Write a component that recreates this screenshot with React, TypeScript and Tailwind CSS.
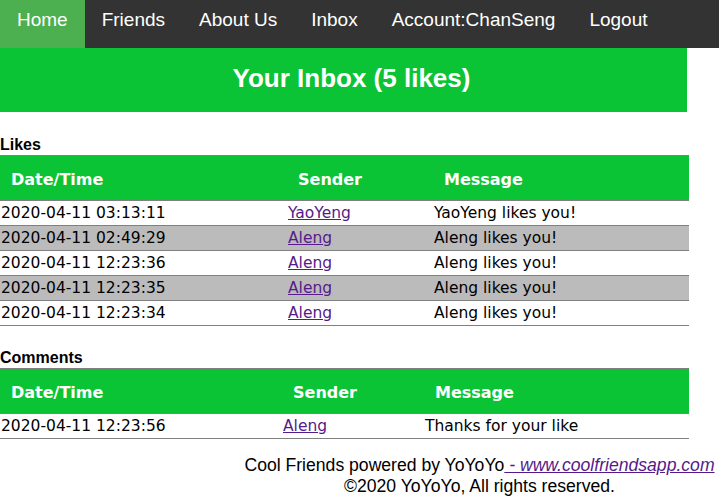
import React from "react";

const likes = [
  { date: "2020-04-11 03:13:11", sender: "YaoYeng", msg: "YaoYeng likes you!" },
  { date: "2020-04-11 02:49:29", sender: "Aleng", msg: "Aleng likes you!" },
  { date: "2020-04-11 12:23:36", sender: "Aleng", msg: "Aleng likes you!" },
  { date: "2020-04-11 12:23:35", sender: "Aleng", msg: "Aleng likes you!" },
  { date: "2020-04-11 12:23:34", sender: "Aleng", msg: "Aleng likes you!" },
];

const comments = [
  { date: "2020-04-11 12:23:56", sender: "Aleng", msg: "Thanks for your like" },
];

const navItems = ["Home", "Friends", "About Us", "Inbox", "Account:ChanSeng", "Logout"];

type Row = { date: string; sender: string; msg: string };

function InboxTable({ rows, widths }: { rows: Row[]; widths: [string, string] }) {
  return (
    <table className="w-[689px] border-collapse table-fixed font-['DejaVu_Sans',Verdana,sans-serif]">
      <colgroup>
        <col className={widths[0]} />
        <col className={widths[1]} />
        <col />
      </colgroup>
      <thead>
        <tr className="bg-[#0bc436] border-y border-[#808080] h-[45px]">
          <th className="text-left pl-[11px] pt-[3px] text-white font-bold text-[16px]">Date/Time</th>
          <th className="text-left pl-[10px] pt-[3px] text-white font-bold text-[16px]">Sender</th>
          <th className="text-left pl-[10px] pt-[3px] text-white font-bold text-[16px]">Message</th>
        </tr>
      </thead>
      <tbody>
        {rows.map((r, i) => (
          <tr key={i} className={`h-[25px] border-b border-[#808080] ${i % 2 === 1 ? "bg-[#bbbbbb]" : "bg-white"}`}>
            <td className="pl-[1px] pt-[1px] text-[15.5px] leading-[23px]">{r.date}</td>
            <td className="pt-[1px] text-[15.5px] leading-[23px]">
              <a href="#" className="text-[#551a8b] underline">{r.sender}</a>
            </td>
            <td className="pt-[1px] text-[15.5px] leading-[23px]">{r.msg}</td>
          </tr>
        ))}
      </tbody>
    </table>
  );
}

export default function App() {
  return (
    <div className="w-[719px] h-[500px] bg-white text-black font-['Liberation_Sans',Arial,sans-serif] overflow-hidden">
      {/* top nav */}
      <div className="flex h-12 bg-[#333333]">
        {navItems.map((item, i) => (
          <a
            key={item}
            href="#"
            className={`px-[17px] pt-[9px] text-[19px] leading-[22px] text-white ${i === 0 ? "bg-[#4caf50]" : ""}`}
          >
            {item}
          </a>
        ))}
      </div>

      <div className="w-[687px] h-16 bg-[#0bc436] flex items-center justify-center pl-4 pb-1">
        <h1 className="text-[26px] font-bold text-white">Your Inbox (5 likes)</h1>
      </div>

      <h3 className="mt-[22px] h-[21px] text-[16px] font-bold leading-[21px]">Likes</h3>
      <InboxTable rows={likes} widths={["w-[288px]", "w-[146px]"]} />

      <h3 className="mt-[21px] h-[21px] text-[16px] font-bold leading-[21px]">Comments</h3>
      <InboxTable rows={comments} widths={["w-[283px]", "w-[142px]"]} />

      <div className="ml-[240px] mt-[16px] text-center text-[17.6px] leading-[21px]">
        <p>
          Cool Friends powered by YoYoYo
          <a href="#" className="text-[#551a8b] underline italic"> - www.coolfriendsapp.com</a>
        </p>
        <p>©2020 YoYoYo, All rights reserved.</p>
      </div>
    </div>
  );
}
